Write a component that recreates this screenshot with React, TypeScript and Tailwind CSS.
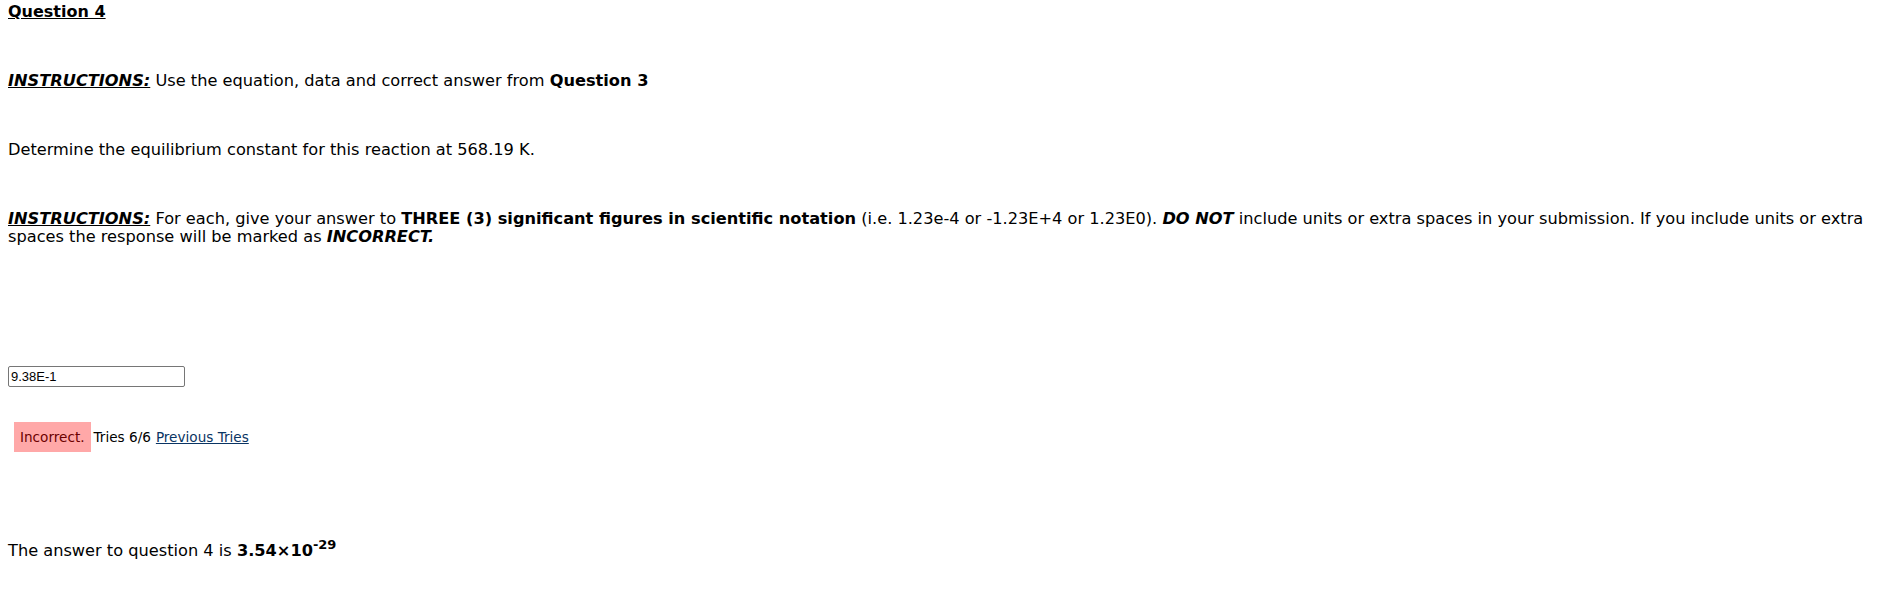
import React from 'react';

const sans = { fontFamily: '"DejaVu Sans", Verdana, sans-serif' };

export default function App() {
  return (
    <div className="min-h-screen bg-white px-2 pt-[3px] text-black" style={sans}>
      {/* Title */}
      <div className="text-[16px] leading-[18px] font-bold underline">Question 4</div>

      {/* Intro instructions */}
      <p className="mt-[51px] text-[16.2px] leading-[18px]">
        <b><i><u>INSTRUCTIONS:</u></i></b> Use the equation, data and correct answer from <b>Question 3</b>
      </p>

      <p className="mt-[51px] text-[16.2px] leading-[18px]">
        Determine the equilibrium constant for this reaction at 568.19 K.
      </p>

      <p className="mt-[51px] text-[16.2px] leading-[18px] whitespace-nowrap">
        <b><i><u>INSTRUCTIONS:</u></i></b> For each, give your answer to{' '}
        <b>THREE (3) significant figures in scientific notation</b> (i.e. 1.23e-4 or -1.23E+4 or 1.23E0).{' '}
        <b><i>DO NOT</i></b> include units or extra spaces in your submission. If you include units or extra
        <br />
        spaces the response will be marked as <b><i>INCORRECT.</i></b>
      </p>

      {/* Answer box */}
      <div className="mt-[118px]">
        <input
          type="text"
          defaultValue="9.38E-1"
          className="h-[21px] w-[177px] rounded-[2px] border border-[#767676] px-[2px] text-[13px] outline-none"
          style={{ fontFamily: '"Liberation Sans", Arial, sans-serif' }}
        />
      </div>

      {/* Feedback */}
      <div className="mt-[34px] flex items-center text-[13.6px]">
        <span className="ml-[6px] flex h-[30px] items-center bg-[#ffa8a8] px-[6px] text-[#6b0000]">Incorrect.</span>
        <span className="ml-[3px]">Tries 6/6</span>
        <a href="#" className="ml-[5px] text-[#0a3463] underline">Previous Tries</a>
      </div>

      {/* Answer reveal */}
      <p className="mt-[90px] text-[16.2px] leading-[18px]">
        The answer to question 4 is{' '}
        <b>
          3.54×10<sup className="-top-[7px] text-[13px]">-29</sup>
        </b>
      </p>
    </div>
  );
}
